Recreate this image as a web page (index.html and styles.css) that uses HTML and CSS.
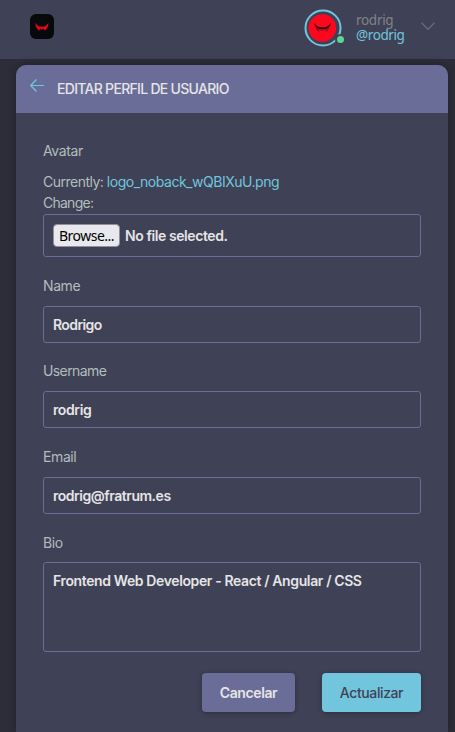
FILE: index.html
```html
<!DOCTYPE html>
<html lang="es">
<head>
<meta charset="utf-8">
<title>Editar perfil de usuario</title>
<link rel="stylesheet" href="styles.css">
</head>
<body>
<header class="topbar">
  <svg class="logo" viewBox="0 0 24 26"><rect width="24" height="25" rx="6" fill="#08090b"/><path d="M5.2 8.7C7.5 12 9.5 12.7 12 12.7S16.500 12 18.400 8.700C18.600 12.500 17 15 14.800 16.800L13.800 14.800 12 15.500 10.200 14.800 9.200 16.800C7 15 5.300 12.500 5.200 8.700Z" fill="#e00718"/></svg>
  <div class="user">
    <div class="avatar">
      <svg viewBox="0 0 38 38" width="38" height="38"><circle cx="19" cy="19" r="17.500" fill="none" stroke="#71c6dd" stroke-width="2"/><circle cx="18.300" cy="19" r="13.800" fill="#ff061f"/><path d="M10 14C13 18 15 18.500 18.500 18.500S24 18 27 14C26 18 25 21 22.500 23L21 20.800 18.500 22 16 20.800 14.500 23C12 21 11 18 10 14Z" fill="#a50b19"/><path d="M10 14C13 18 15 18.300 18.500 18.300S24 18 27 14C25 19 23 20 18.500 20S12 19 10 14Z" fill="#260a10"/></svg>
      <span class="status"></span>
    </div>
    <div class="names"><span class="name">rodrig</span><span class="handle">@rodrig</span></div>
    <svg class="chevron" viewBox="0 0 14 9"><path d="M.5 .7L7 7.500 13.500 .7" fill="none" stroke="#696d97" stroke-width="1.200"/></svg>
  </div>
</header>
<main class="card">
  <div class="card-head">
    <svg class="back" viewBox="0 0 14 13"><path d="M14 6.500H.8M6.500 .5L.7 6.500 6.500 12.500" fill="none" stroke="#71c6dd" stroke-width="1.200"/></svg>
    <h1>EDITAR PERFIL DE USUARIO</h1>
  </div>
  <form class="form">
    <label class="lbl">Avatar</label>
    <div class="current">Currently: <a>logo_noback_wQBIXuU.png</a></div>
    <div class="change">Change:</div>
    <div class="box file"><span class="browse">Browse...</span><span class="nofile">No file selected.</span></div>
    <label class="lbl">Name</label>
    <div class="box"><span class="v-name">Rodrigo</span></div>
    <label class="lbl username">Username</label>
    <div class="box"><span class="v-user">rodrig</span></div>
    <label class="lbl email">Email</label>
    <div class="box"><span class="v-mail">rodrig@fratrum.es</span></div>
    <label class="lbl bio-label">Bio</label>
    <div class="box bio"><span class="v-bio">Frontend Web Developer - React / Angular / CSS</span></div>
    <div class="actions"><button type="button" class="btn cancel">Cancelar</button><button type="button" class="btn update">Actualizar</button></div>
  </form>
</main>
</body>
</html>
```
FILE: styles.css
```css
* { box-sizing: border-box; }
html { height: 100%; overflow: hidden; background: #2d2d39; }
body { margin: 0; height: 732px; overflow: hidden; font: 14px/20px Inter, sans-serif; color: #e5e5e5; display: flex; flex-direction: column; }
.topbar { height: 59px; flex: none; background: #3f4156; display: flex; justify-content: space-between; align-items: flex-start; padding: 0 20px 0 30px; }
.logo { width: 24px; height: 26px; margin-top: 14px; }
.user { display: flex; }
.avatar { position: relative; width: 38px; height: 38px; margin: 9px 14px 0 0; }
.avatar svg { display: block; }
.status { position: absolute; right: -4px; bottom: 2px; width: 11px; height: 11px; border: 2px solid #3f4156; border-radius: 50%; background: #5dd693; }
.names { display: flex; flex-direction: column; width: 65px; padding-top: 13px; line-height: 15px; font-size: 13.5px; font-family: "Noto Sans", sans-serif; letter-spacing: -.4px; }
.name { color: #828286; letter-spacing: -.3px; }
.handle { color: #71c6dd; }
.chevron { width: 14px; height: 9px; margin-top: 22px; }
.card { width: 432px; margin: 6px 0 0 16px; flex: 1; background: #3f4156; border-radius: 10px 10px 0 0; box-shadow: 0 0 9px rgba(0, 0, 0, .3); }
.card-head { height: 48px; background: #6b6d99; border-radius: 10px 10px 0 0; display: flex; padding-left: 14px; }
.back { width: 14px; height: 13px; margin: 14px 13px 0 0; }
h1 { margin: 14px 0 0; font-size: 14px; line-height: 20px; font-weight: 500; letter-spacing: -.7px; white-space: nowrap; }
.form { padding: 27px 27px 0; display: flex; flex-direction: column; white-space: nowrap; }
.lbl, .current, .change { color: #b2bdbd; font-size: 14px; line-height: 21px; letter-spacing: -.4px; }
.lbl { height: 31px; }
.current { letter-spacing: -.5px; }
.current a { color: #71c6dd; letter-spacing: -.48px; }
.change { height: 22px; letter-spacing: -.75px; }
.box { height: 37px; border: 1px solid #696d97; border-radius: 3px; padding: 0 9px; margin-bottom: 18px; display: flex; align-items: center; font-weight: 600; font-size: 14px; letter-spacing: -.38px; }
.file { height: 43px; }
.nofile { letter-spacing: -.42px; }
.browse { height: 23px; width: 67px; border: 1px solid #8f8f9d; border-radius: 4px; background: #e9e9ed; color: #000; font: 14px/21px "Noto Sans", sans-serif; text-align: center; margin-right: 5px; letter-spacing: -.5px; }
.v-name { letter-spacing: -.6px; }
.v-mail { letter-spacing: -.47px; }
.username { height: 30px; line-height: 20px; letter-spacing: -.6px; }
.bio-label { height: 30px; }
.bio { height: 90px; align-items: flex-start; padding-top: 8px; }
.actions { display: flex; justify-content: flex-end; gap: 27px; margin-top: 3px; }
.btn { height: 39px; border: 0; border-radius: 4px; padding: 0; font: 600 14px/20px Inter, sans-serif; letter-spacing: -.4px; box-shadow: 0 1px 5px rgba(0, 0, 0, .3); }
.cancel { width: 93px; background: #6b6d99; color: #e5e5e5; }
.update { width: 99px; background: #71c6dd; color: #3f4156; font-weight: 500; }
```
